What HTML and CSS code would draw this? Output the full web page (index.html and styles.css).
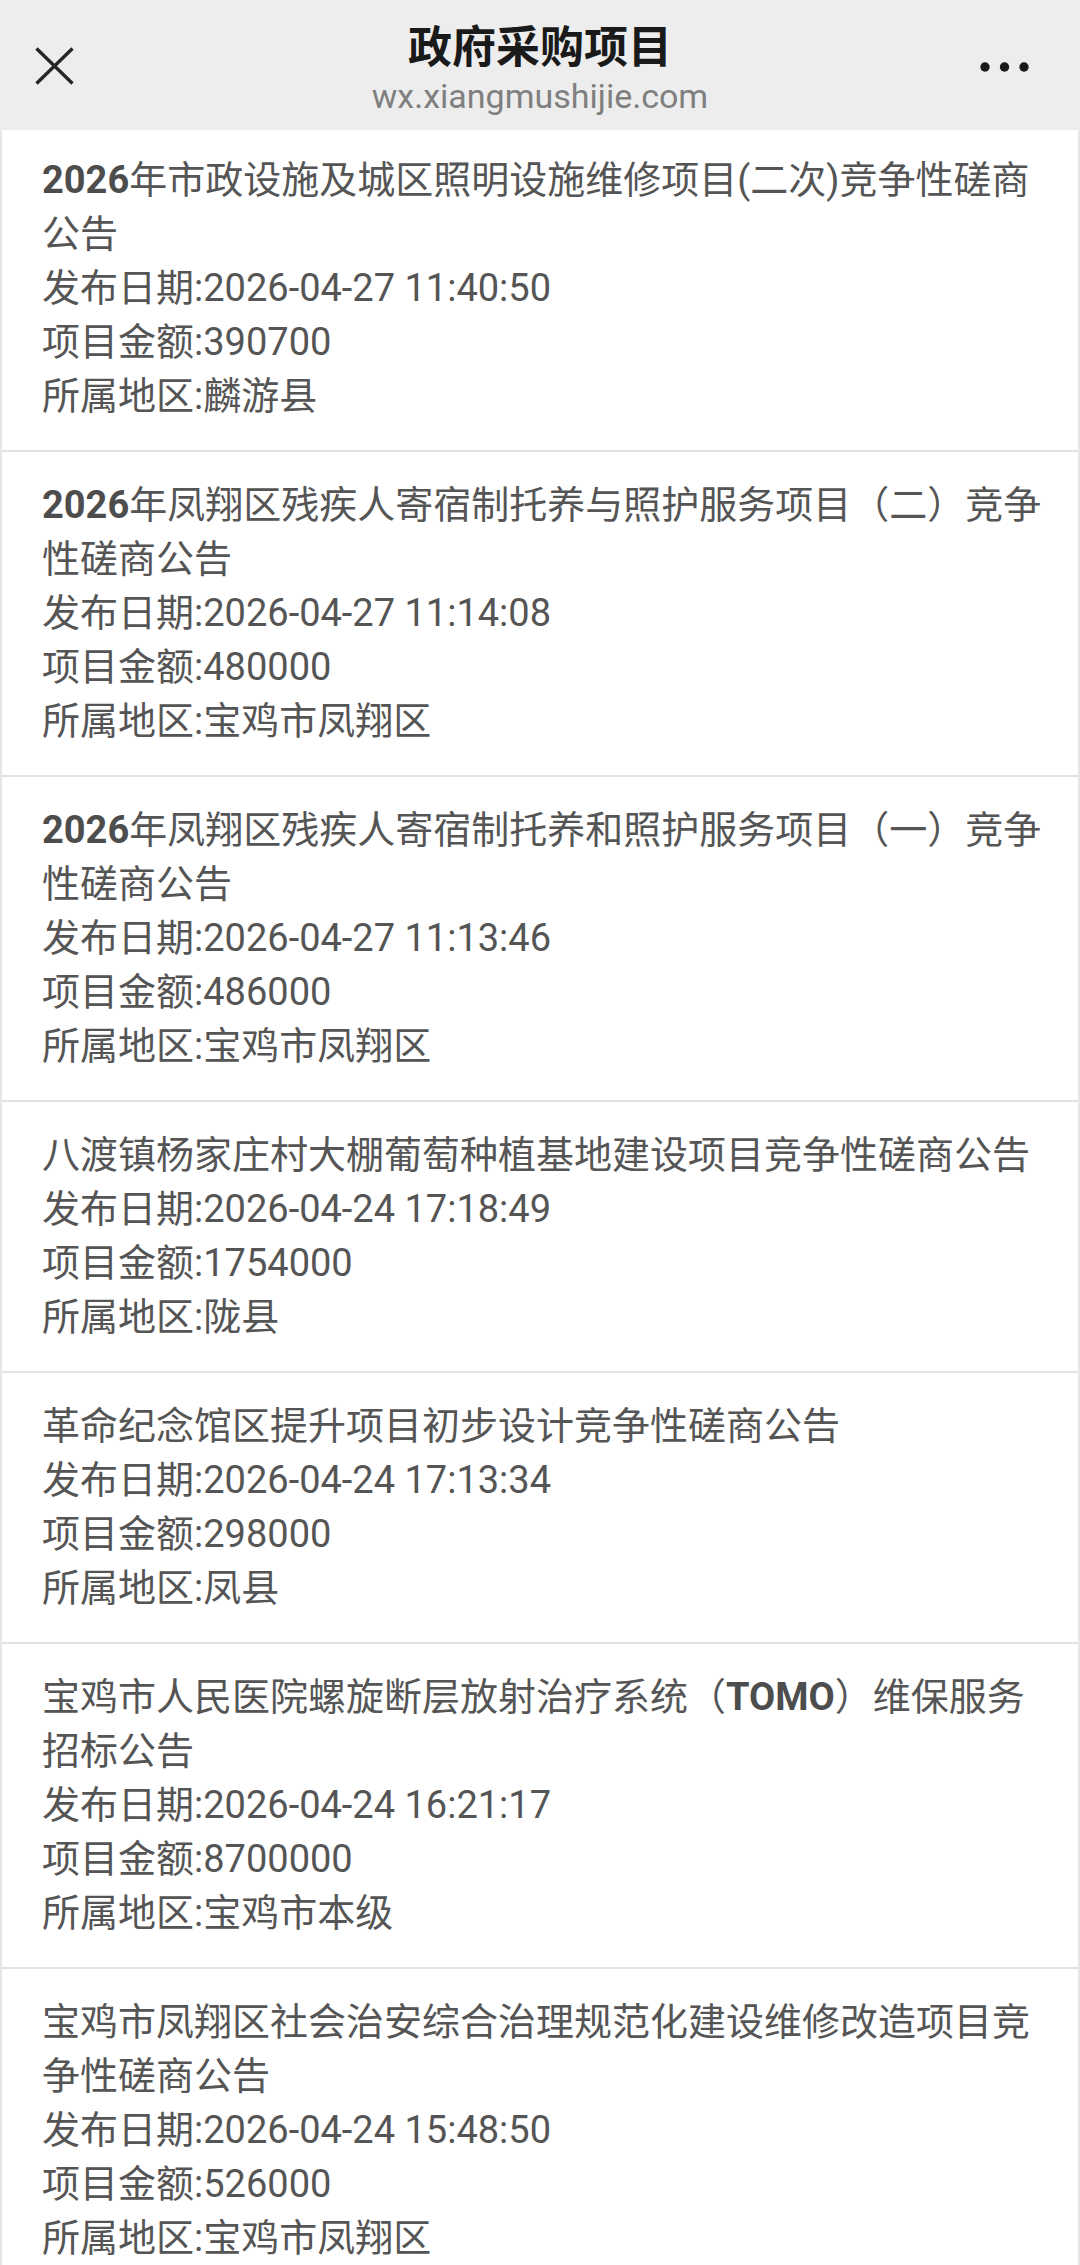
FILE: index.html
```html
<!DOCTYPE html>
<html lang="zh-CN">
<head>
    <meta charset="UTF-8">
    <meta name="viewport" content="width=device-width, initial-scale=1.0">
    <title>政府采购项目</title>
    <link rel="stylesheet" href="styles.css">
</head>
<body>
    <header class="topbar">
        <div class="topbar-left">
            <svg class="close-icon" width="39" height="38" viewBox="0 0 39 38">
                <path d="M1.5 1.5 L37.5 36.5 M37.5 1.5 L1.5 36.5" stroke="#262626" stroke-width="3.4" fill="none"/>
            </svg>
        </div>
        <div class="topbar-title">
            <h1>政府采购项目</h1>
            <div class="domain">wx.xiangmushijie.com</div>
        </div>
        <div class="topbar-right">
            <svg class="more-icon" width="50" height="12" viewBox="0 0 50 12">
                <circle cx="5" cy="6" r="4.7" fill="#1a1a1a"/>
                <circle cx="24.5" cy="6" r="4.7" fill="#1a1a1a"/>
                <circle cx="44" cy="6" r="4.7" fill="#1a1a1a"/>
            </svg>
        </div>
    </header>

    <ul class="project-list">
        <li class="project">
            <div class="title"><b>2026</b>年市政设施及城区照明设施维修项目(二次)竞争性磋商公告</div>
            <div>发布日期:2026-04-27 11:40:50</div>
            <div>项目金额:390700</div>
            <div>所属地区:麟游县</div>
        </li>
        <li class="project">
            <div class="title"><b>2026</b>年凤翔区残疾人寄宿制托养与照护服务项目（二）竞争性磋商公告</div>
            <div>发布日期:2026-04-27 11:14:08</div>
            <div>项目金额:480000</div>
            <div>所属地区:宝鸡市凤翔区</div>
        </li>
        <li class="project">
            <div class="title"><b>2026</b>年凤翔区残疾人寄宿制托养和照护服务项目（一）竞争性磋商公告</div>
            <div>发布日期:2026-04-27 11:13:46</div>
            <div>项目金额:486000</div>
            <div>所属地区:宝鸡市凤翔区</div>
        </li>
        <li class="project">
            <div class="title">八渡镇杨家庄村大棚葡萄种植基地建设项目竞争性磋商公告</div>
            <div>发布日期:2026-04-24 17:18:49</div>
            <div>项目金额:1754000</div>
            <div>所属地区:陇县</div>
        </li>
        <li class="project">
            <div class="title">革命纪念馆区提升项目初步设计竞争性磋商公告</div>
            <div>发布日期:2026-04-24 17:13:34</div>
            <div>项目金额:298000</div>
            <div>所属地区:凤县</div>
        </li>
        <li class="project">
            <div class="title">宝鸡市人民医院螺旋断层放射治疗系统（<b>TOMO</b>）维保服务招标公告</div>
            <div>发布日期:2026-04-24 16:21:17</div>
            <div>项目金额:8700000</div>
            <div>所属地区:宝鸡市本级</div>
        </li>
        <li class="project">
            <div class="title">宝鸡市凤翔区社会治安综合治理规范化建设维修改造项目竞争性磋商公告</div>
            <div>发布日期:2026-04-24 15:48:50</div>
            <div>项目金额:526000</div>
            <div>所属地区:宝鸡市凤翔区</div>
        </li>
    </ul>
</body>
</html>
```

FILE: styles.css
```css
* {
    margin: 0;
    padding: 0;
    box-sizing: border-box;
}

body {
    font-family: Roboto, 'Noto Sans CJK SC', sans-serif;
    background: #ffffff;
    color: #555555;
}

/* top bar (wechat style) */
.topbar {
    height: 130px;
    background: #ededed;
    display: grid;
    grid-template-columns: 1fr auto 1fr;
    align-items: start;
}

.close-icon {
    display: block;
    margin: 47px 0 0 35px;
}

.topbar-title {
    text-align: center;
    padding-top: 18px;
}

.topbar-title h1 {
    font-family: 'Noto Sans CJK SC', sans-serif;
    font-size: 44px;
    font-weight: 700;
    line-height: 52px;
    color: #1a1a1a;
}

.domain {
    font-size: 34px;
    line-height: 40px;
    margin-top: 6px;
    color: #7f7f7f;
}

.topbar-right {
    justify-self: end;
}

.more-icon {
    display: block;
    margin: 61px 50px 0 0;
}

/* project list */
.project-list {
    list-style: none;
    border-left: 2px solid #e6e6e6;
    border-right: 2px solid #e6e6e6;
}

.project {
    padding: 26px 32px 27px 40px;
    border-bottom: 2px solid #e2e2e2;
    font-size: 38px;
    line-height: 54px;
}

.project:first-child {
    padding-top: 23px;
}

.project .title b {
    font-weight: 700;
    color: #4d4d4d;
}
```
